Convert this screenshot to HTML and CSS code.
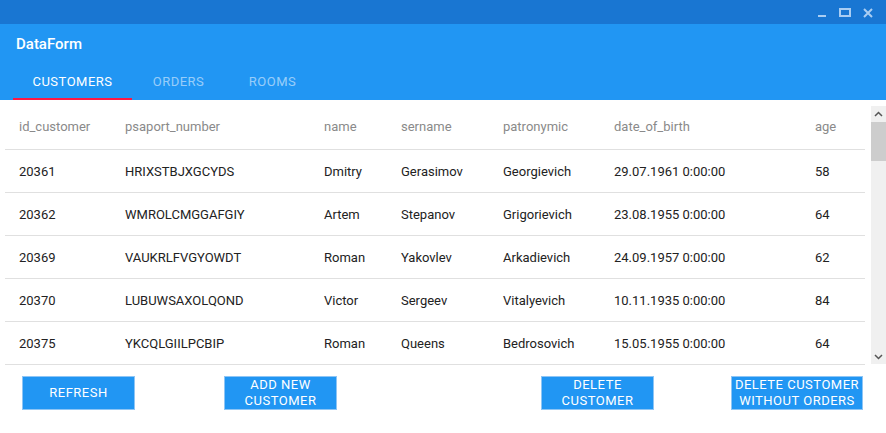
FILE: index.html
```html
<!DOCTYPE html>
<html>
<head>
<meta charset="utf-8">
<link rel="stylesheet" href="styles.css">
</head>
<body>
<div class="window">
  <div class="titlebar">
    <svg class="ctl" width="10" height="10" viewBox="0 0 10 10"><rect x="1" y="7" width="8" height="2" fill="#a9cdf3"/></svg>
    <svg class="ctl" width="12" height="10" viewBox="0 0 12 10"><rect x="1" y="1" width="10" height="7" fill="none" stroke="#a9cdf3" stroke-width="2"/></svg>
    <svg class="ctl" width="10" height="10" viewBox="0 0 10 10"><path d="M1 1 L9 9 M9 1 L1 9" stroke="#a9cdf3" stroke-width="2"/></svg>
  </div>
  <div class="appbar">
    <div class="apptitle">DataForm</div>
    <div class="tabs">
      <div class="tab active">CUSTOMERS</div>
      <div class="tab t2">ORDERS</div>
      <div class="tab t3">ROOMS</div>
    </div>
  </div>
  <div class="content">
    <div class="gridwrap">
      <div class="grid">
        <div class="row head">
          <div>id_customer</div><div>psaport_number</div><div>name</div><div>sername</div><div>patronymic</div><div>date_of_birth</div><div>age</div>
        </div>
        <div class="row">
          <div>20361</div><div>HRIXSTBJXGCYDS</div><div>Dmitry</div><div>Gerasimov</div><div>Georgievich</div><div>29.07.1961 0:00:00</div><div>58</div>
        </div>
        <div class="row">
          <div>20362</div><div>WMROLCMGGAFGIY</div><div>Artem</div><div>Stepanov</div><div>Grigorievich</div><div>23.08.1955 0:00:00</div><div>64</div>
        </div>
        <div class="row">
          <div>20369</div><div>VAUKRLFVGYOWDT</div><div>Roman</div><div>Yakovlev</div><div>Arkadievich</div><div>24.09.1957 0:00:00</div><div>62</div>
        </div>
        <div class="row">
          <div>20370</div><div>LUBUWSAXOLQOND</div><div>Victor</div><div>Sergeev</div><div>Vitalyevich</div><div>10.11.1935 0:00:00</div><div>84</div>
        </div>
        <div class="row">
          <div>20375</div><div>YKCQLGIILPCBIP</div><div>Roman</div><div>Queens</div><div>Bedrosovich</div><div>15.05.1955 0:00:00</div><div>64</div>
        </div>
      </div>
      <div class="scrollbar">
        <svg class="arrow" width="15" height="14" viewBox="0 0 15 14"><path d="M4 9 L7.5 5.5 L11 9" fill="none" stroke="#555" stroke-width="1.5"/></svg>
        <div class="thumb"></div>
        <div class="track"></div>
        <svg class="arrow" width="15" height="14" viewBox="0 0 15 14"><path d="M4 5 L7.5 8.5 L11 5" fill="none" stroke="#555" stroke-width="1.5"/></svg>
      </div>
    </div>
    <div class="buttons">
      <button class="btn b1">REFRESH</button>
      <button class="btn b2">ADD NEW<br>CUSTOMER</button>
      <button class="btn b3">DELETE<br>CUSTOMER</button>
      <button class="btn b4">DELETE CUSTOMER<br>WITHOUT ORDERS</button>
    </div>
  </div>
</div>
</body>
</html>
```
FILE: styles.css
```css
* { box-sizing: border-box; }
html, body { margin: 0; padding: 0; }
body {
  width: 886px;
  height: 433px;
  overflow: hidden;
  font-family: Roboto, "Liberation Sans", sans-serif;
  background: #fff;
}
.window { width: 886px; height: 433px; display: flex; flex-direction: column; }
.titlebar {
  height: 24px;
  background: #1976d2;
  display: flex;
  justify-content: flex-end;
  align-items: center;
  gap: 12px;
  padding-right: 13px;
  padding-top: 2px;
}
.appbar {
  height: 76px;
  background: #2196f3;
  display: flex;
  flex-direction: column;
}
.apptitle {
  color: #fff;
  font-size: 15px;
  font-weight: 500;
  padding-left: 16px;
  margin-top: 10px;
  height: 20px;
  line-height: 20px;
}
.tabs {
  display: flex;
  padding-left: 13px;
  margin-top: 16px;
}
.tab {
  color: rgba(255,255,255,0.55);
  font-size: 13px;
  font-weight: 400;
  letter-spacing: 0.5px;
  height: 30px;
  line-height: 24px;
  text-align: center;
  width: 93px;
  border-bottom: 2px solid transparent;
}
.tab.t3 { width: 95px; }
.tab.active {
  color: #fff;
  width: 119px;
  border-bottom-color: #ff1744;
}
.content {
  flex: 1;
  display: flex;
  flex-direction: column;
}
.gridwrap {
  display: flex;
  height: 265px;
  padding-left: 5px;
}
.grid { width: 860px; }
.row {
  display: grid;
  grid-template-columns: 106px 199px 77px 102px 111px 201px 64px;
  height: 43px;
  align-items: center;
  border-bottom: 1px solid #e0e0e0;
  font-size: 13px;
  color: #222;
  padding-left: 14px;
}
.row.head {
  height: 50px;
  color: #8a8a8a;
  padding-top: 4px;
}
.scrollbar {
  margin-left: 6px;
  margin-top: 6px;
  width: 15px;
  height: 258px;
  background: #f0f0f0;
  display: flex;
  flex-direction: column;
}
.arrow { display: block; flex: none; margin-top: 1px; }
.thumb { height: 39px; background: #cdcdcd; flex: none; margin-top: 1px; }
.track { flex: 1; }
.buttons {
  height: 60px;
  display: flex;
  padding-top: 11px;
}
.btn {
  height: 34px;
  width: 113px;
  background: #2196f3;
  border: 1px solid #8ec5f5;
  color: #fff;
  font-family: Roboto, "Liberation Sans", sans-serif;
  font-size: 13px;
  font-weight: 400;
  letter-spacing: 0.5px;
  line-height: 16px;
  padding: 0;
  text-align: center;
}
.b1 { margin-left: 22px; }
.b2 { margin-left: 89px; }
.b3 { margin-left: 204px; }
.b4 { margin-left: 77px; width: 132px; }
```
